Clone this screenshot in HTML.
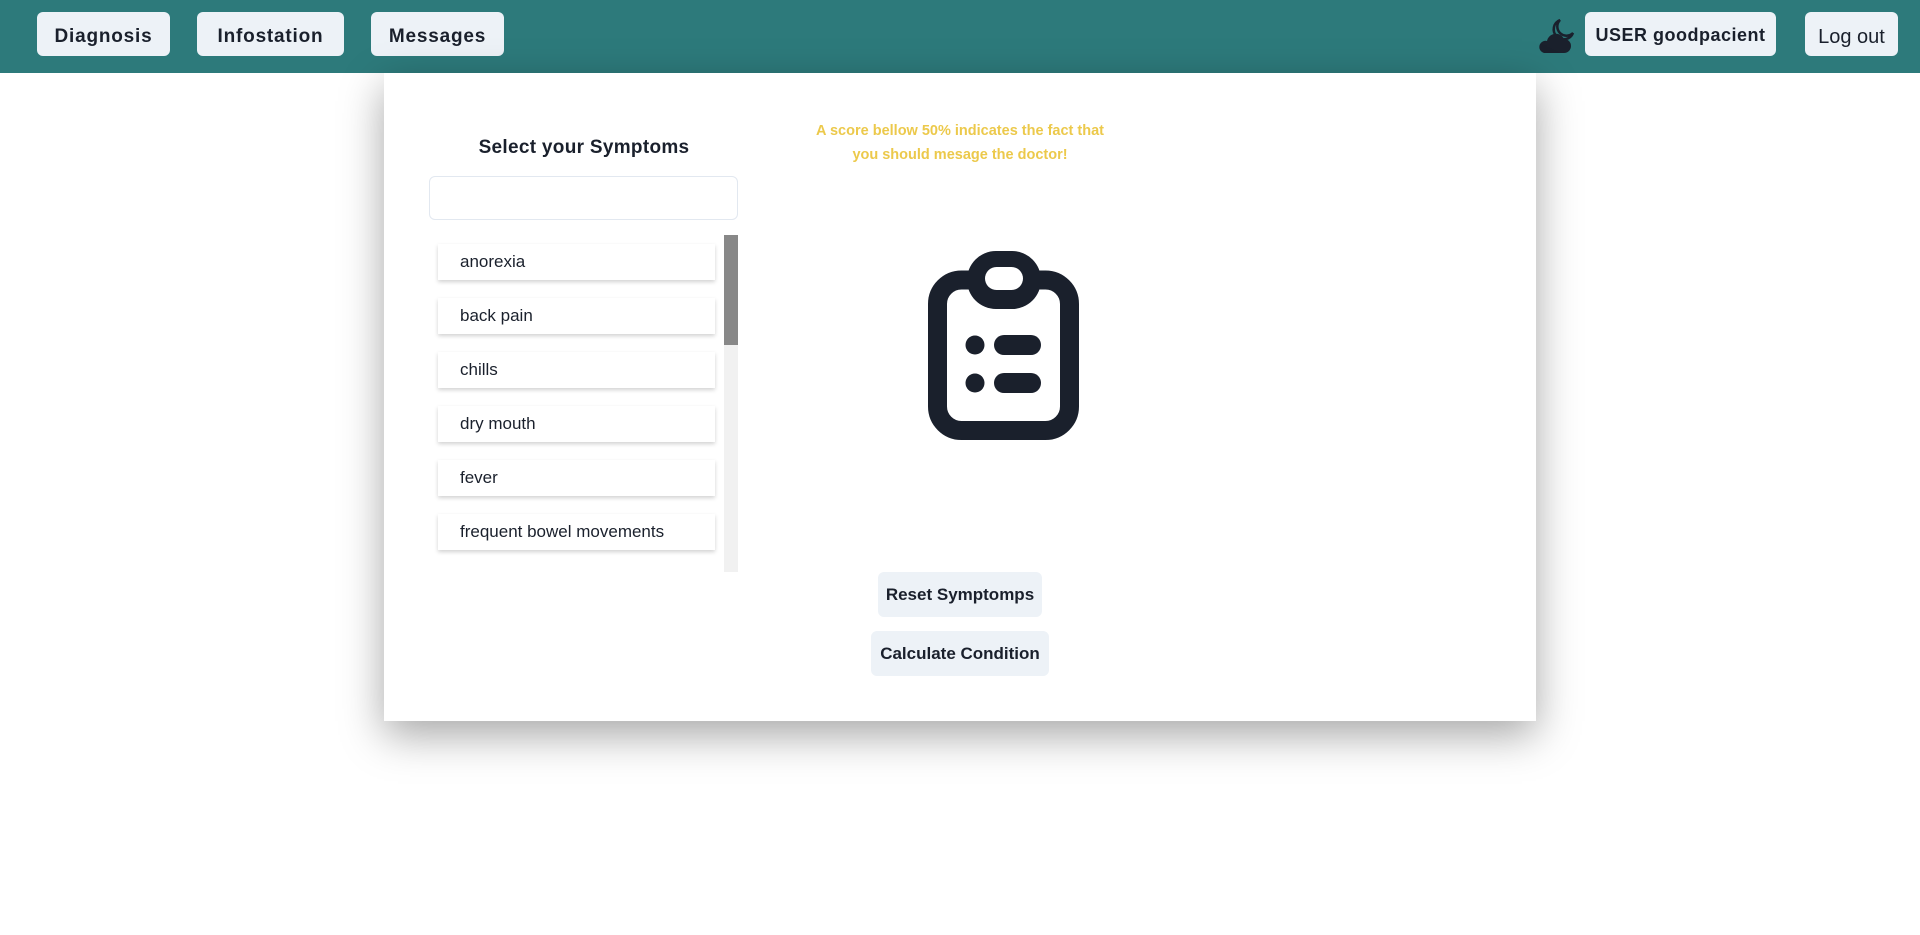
<!DOCTYPE html>
<html><head><meta charset="utf-8"><style>
*{box-sizing:border-box;margin:0;padding:0}
body{width:1920px;height:935px;background:#fff;font-family:"Liberation Sans",sans-serif;color:#1a202c;position:relative;overflow:hidden}
.nav{position:absolute;left:0;top:0;width:1920px;height:73px;background:#2d7a7b}
.nb{position:absolute;top:12px;height:44px;padding-top:6px;background:#edf2f7;border-radius:6px;display:flex;align-items:center;justify-content:center;font-size:19px;font-weight:600;letter-spacing:.8px;color:#1a202c}
.card{position:absolute;left:384px;top:73px;width:1152px;height:648px;background:#fff;box-shadow:0 14px 40px rgba(0,0,0,.35)}
.abs{position:absolute}
.title{left:420px;top:137px;width:328px;text-align:center;font-size:19px;font-weight:600;letter-spacing:.3px}
.inp{left:429px;top:176px;width:309px;height:44px;border:1px solid #e2e8f0;border-radius:6px}
.sb{left:724px;top:235px;width:14px;height:337px;background:#f1f1f1}
.th{left:724px;top:235px;width:14px;height:110px;background:#888}
.it{position:absolute;left:438px;width:277px;height:36px;background:#fff;box-shadow:0 2px 4px rgba(0,0,0,.18);font-size:17px;padding-left:22px;line-height:36px;color:#1a202c}
.warn{left:780px;top:119px;width:360px;text-align:center;color:#ecc94b;font-size:14.5px;font-weight:600;line-height:24px}
.btn{position:absolute;height:45px;background:#edf2f7;border-radius:6px;display:flex;align-items:center;justify-content:center;font-size:17px;font-weight:600}
</style></head><body>
<div class="nav">
<div class="nb" style="left:37px;width:133px">Diagnosis</div>
<div class="nb" style="left:197px;width:147px">Infostation</div>
<div class="nb" style="left:371px;width:133px">Messages</div>
<svg class="abs" style="left:1536px;top:18px" width="42" height="36" viewBox="0 0 42 36">
<path d="M24 2 A10 10 0 1 0 37 15 A8 8 0 0 1 24 2Z" fill="none" stroke="#1a202c" stroke-width="2.5"/>
<path d="M8 35 h20 a7 7 0 0 0 0-14 a9 9 0 0 0-17 2 a6 6 0 0 0-3 12z" fill="#1a202c"/>
</svg>
<div class="nb" style="left:1585px;width:191px;font-size:18px;letter-spacing:.5px;padding-top:2px">USER goodpacient</div>
<div class="nb" style="left:1805px;width:93px;letter-spacing:0;font-weight:normal;font-size:20px">Log out</div>
</div>
<div class="card"></div>
<div class="abs title">Select your Symptoms</div>
<div class="abs inp"></div>
<div class="abs sb"></div><div class="abs th"></div>
<div class="it" style="top:244px">anorexia</div>
<div class="it" style="top:298px">back pain</div>
<div class="it" style="top:352px">chills</div>
<div class="it" style="top:406px">dry mouth</div>
<div class="it" style="top:460px">fever</div>
<div class="it" style="top:514px">frequent bowel movements</div>
<div class="abs" style="left:438px;top:567px;width:277px;height:5px;background:#fff"></div>
<div class="abs warn">A score bellow 50% indicates the fact that<br>you should mesage the doctor!</div>
<svg class="abs" style="left:928px;top:251px" width="151" height="190" viewBox="0 0 151 190">
<rect x="9.5" y="29" width="132" height="150.5" rx="24" fill="none" stroke="#1a202c" stroke-width="19"/>
<rect x="39" y="0" width="74" height="58" rx="29" fill="#1a202c"/>
<rect x="57" y="16" width="38" height="23" rx="11.5" fill="#fff"/>
<circle cx="47" cy="94" r="9.5" fill="#1a202c"/><circle cx="47" cy="132" r="9.5" fill="#1a202c"/>
<rect x="66" y="84" width="47" height="20" rx="10" fill="#1a202c"/><rect x="66" y="122" width="47" height="20" rx="10" fill="#1a202c"/>
</svg>
<div class="btn" style="left:878px;top:572px;width:164px">Reset Symptomps</div>
<div class="btn" style="left:871px;top:631px;width:178px">Calculate Condition</div>
</body></html>
